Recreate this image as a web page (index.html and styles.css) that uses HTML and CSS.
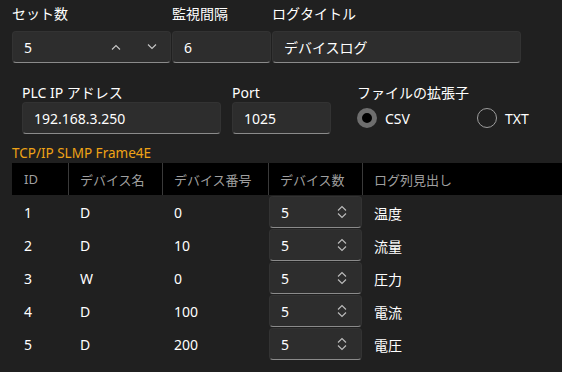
FILE: index.html
```html
<!DOCTYPE html>
<html lang="ja">
<head>
    <meta charset="UTF-8">
    <title>ログ設定</title>
    <link rel="stylesheet" href="styles.css">
</head>
<body>
    <div class="page">
        <!-- 上段 -->
        <div class="row-top">
            <div class="field set-count">
                <div class="label">セット数</div>
                <div class="input number">
                    <span class="value">5</span>
                    <span class="spin">
                        <svg width="10" height="6" viewBox="0 0 10 6"><path d="M1 5.5 L5 1.5 L9 5.5" fill="none" stroke="#c8c8c8" stroke-width="1.1"/></svg>
                        <svg width="10" height="6" viewBox="0 0 10 6"><path d="M1 0.5 L5 4.5 L9 0.5" fill="none" stroke="#c8c8c8" stroke-width="1.1"/></svg>
                    </span>
                </div>
            </div>
            <div class="field interval">
                <div class="label">監視間隔</div>
                <div class="input"><span class="value">6</span></div>
            </div>
            <div class="field log-title">
                <div class="label">ログタイトル</div>
                <div class="input"><span class="value">デバイスログ</span></div>
            </div>
        </div>

        <!-- 接続設定 -->
        <div class="row-conn">
            <div class="field ip">
                <div class="label">PLC IP アドレス</div>
                <div class="input"><span class="value">192.168.3.250</span></div>
            </div>
            <div class="field port">
                <div class="label">Port</div>
                <div class="input"><span class="value">1025</span></div>
            </div>
            <div class="field ext">
                <div class="label">ファイルの拡張子</div>
                <div class="radios">
                    <div class="radio checked"><span class="dot"></span>CSV</div>
                    <div class="radio"><span class="dot"></span>TXT</div>
                </div>
            </div>
        </div>

        <div class="caption">TCP/IP SLMP Frame4E</div>

        <div class="table">
            <div class="th">ID</div>
            <div class="th">デバイス名</div>
            <div class="th">デバイス番号</div>
            <div class="th">デバイス数</div>
            <div class="th">ログ列見出し</div>

            <div class="td">1</div><div class="td">D</div><div class="td">0</div>
            <div class="td combo-cell"><div class="combo">5<svg width="10" height="14" viewBox="0 0 10 14"><path d="M1 5.5 L5 1.5 L9 5.5 M1 8.5 L5 12.5 L9 8.5" fill="none" stroke="#bdbdbd" stroke-width="1.1"/></svg></div></div>
            <div class="td">温度</div>

            <div class="td">2</div><div class="td">D</div><div class="td">10</div>
            <div class="td combo-cell"><div class="combo">5<svg width="10" height="14" viewBox="0 0 10 14"><path d="M1 5.5 L5 1.5 L9 5.5 M1 8.5 L5 12.5 L9 8.5" fill="none" stroke="#bdbdbd" stroke-width="1.1"/></svg></div></div>
            <div class="td">流量</div>

            <div class="td">3</div><div class="td">W</div><div class="td">0</div>
            <div class="td combo-cell"><div class="combo">5<svg width="10" height="14" viewBox="0 0 10 14"><path d="M1 5.5 L5 1.5 L9 5.5 M1 8.5 L5 12.5 L9 8.5" fill="none" stroke="#bdbdbd" stroke-width="1.1"/></svg></div></div>
            <div class="td">圧力</div>

            <div class="td">4</div><div class="td">D</div><div class="td">100</div>
            <div class="td combo-cell"><div class="combo">5<svg width="10" height="14" viewBox="0 0 10 14"><path d="M1 5.5 L5 1.5 L9 5.5 M1 8.5 L5 12.5 L9 8.5" fill="none" stroke="#bdbdbd" stroke-width="1.1"/></svg></div></div>
            <div class="td">電流</div>

            <div class="td">5</div><div class="td">D</div><div class="td">200</div>
            <div class="td combo-cell"><div class="combo">5<svg width="10" height="14" viewBox="0 0 10 14"><path d="M1 5.5 L5 1.5 L9 5.5 M1 8.5 L5 12.5 L9 8.5" fill="none" stroke="#bdbdbd" stroke-width="1.1"/></svg></div></div>
            <div class="td">電圧</div>
        </div>
    </div>
</body>
</html>
```

FILE: styles.css
```css
body {
    margin: 0;
    background-color: #202020;
    color: #ffffff;
    font-family: "Noto Sans", "Noto Sans CJK JP", sans-serif;
    font-size: 14px;
    overflow: hidden;
}

.page {
    padding: 4px 0 0 12px;
}

.label {
    line-height: 20px;
    height: 20px;
}

.input {
    display: flex;
    align-items: center;
    box-sizing: border-box;
    height: 32px;
    padding: 0 10px 0 11px;
    background-color: #2d2d2d;
    border: 1px solid #333333;
    border-bottom-color: #8b8b8b;
    border-radius: 4px;
}

.input .value {
    flex: 1;
}

/* 上段 */
.row-top {
    display: flex;
    gap: 1px;
}

.row-top .label {
    margin-bottom: 7px;
}

.set-count { width: 159px; }
.interval { width: 99px; }
.log-title { width: 249px; }

.spin {
    display: flex;
    gap: 26px;
    margin-right: 3px;
}

/* 接続設定 */
.row-conn {
    display: flex;
    margin-top: 20px;
    padding-left: 10px;
}

.row-conn .label {
    height: 19px;
    line-height: 19px;
}

.ip { width: 199px; margin-right: 11px; }
.port { width: 99px; margin-right: 26px; }
.ext { width: 190px; }

.radios {
    display: flex;
    height: 32px;
    align-items: center;
}

.radio {
    display: flex;
    align-items: center;
    gap: 8px;
}

.radio:first-child {
    width: 120px;
    flex-shrink: 0;
}

.radio .dot {
    box-sizing: border-box;
    width: 20px;
    height: 20px;
    border-radius: 50%;
    border: 1px solid #9d9d9d;
}

.radio.checked .dot {
    border: 5px solid #6e6e6e;
    background-color: #000000;
}

.caption {
    margin-top: 9px;
    color: #efa316;
    font-size: 13.5px;
    line-height: 20px;
}

/* テーブル */
.table {
    display: grid;
    grid-template-columns: 56px 94px 106px 94px 1fr;
    grid-auto-rows: 33px;
}

.th {
    background-color: #000000;
    color: #9f9f9f;
    font-size: 13px;
    height: 32px;
    display: flex;
    align-items: center;
    padding-left: 12px;
}

.th + .th {
    border-left: 1px solid #3a3a3a;
    padding-left: 11px;
}

.td {
    display: flex;
    align-items: center;
    padding-left: 12px;
}

.combo-cell {
    padding-left: 1px;
    align-items: flex-start;
}

.combo {
    display: flex;
    align-items: center;
    justify-content: space-between;
    box-sizing: border-box;
    width: 94px;
    height: 32px;
    padding: 0 14px 0 11px;
    background-color: #2d2d2d;
    border: 1px solid #333333;
    border-bottom-color: #8b8b8b;
    border-radius: 4px;
}
```
